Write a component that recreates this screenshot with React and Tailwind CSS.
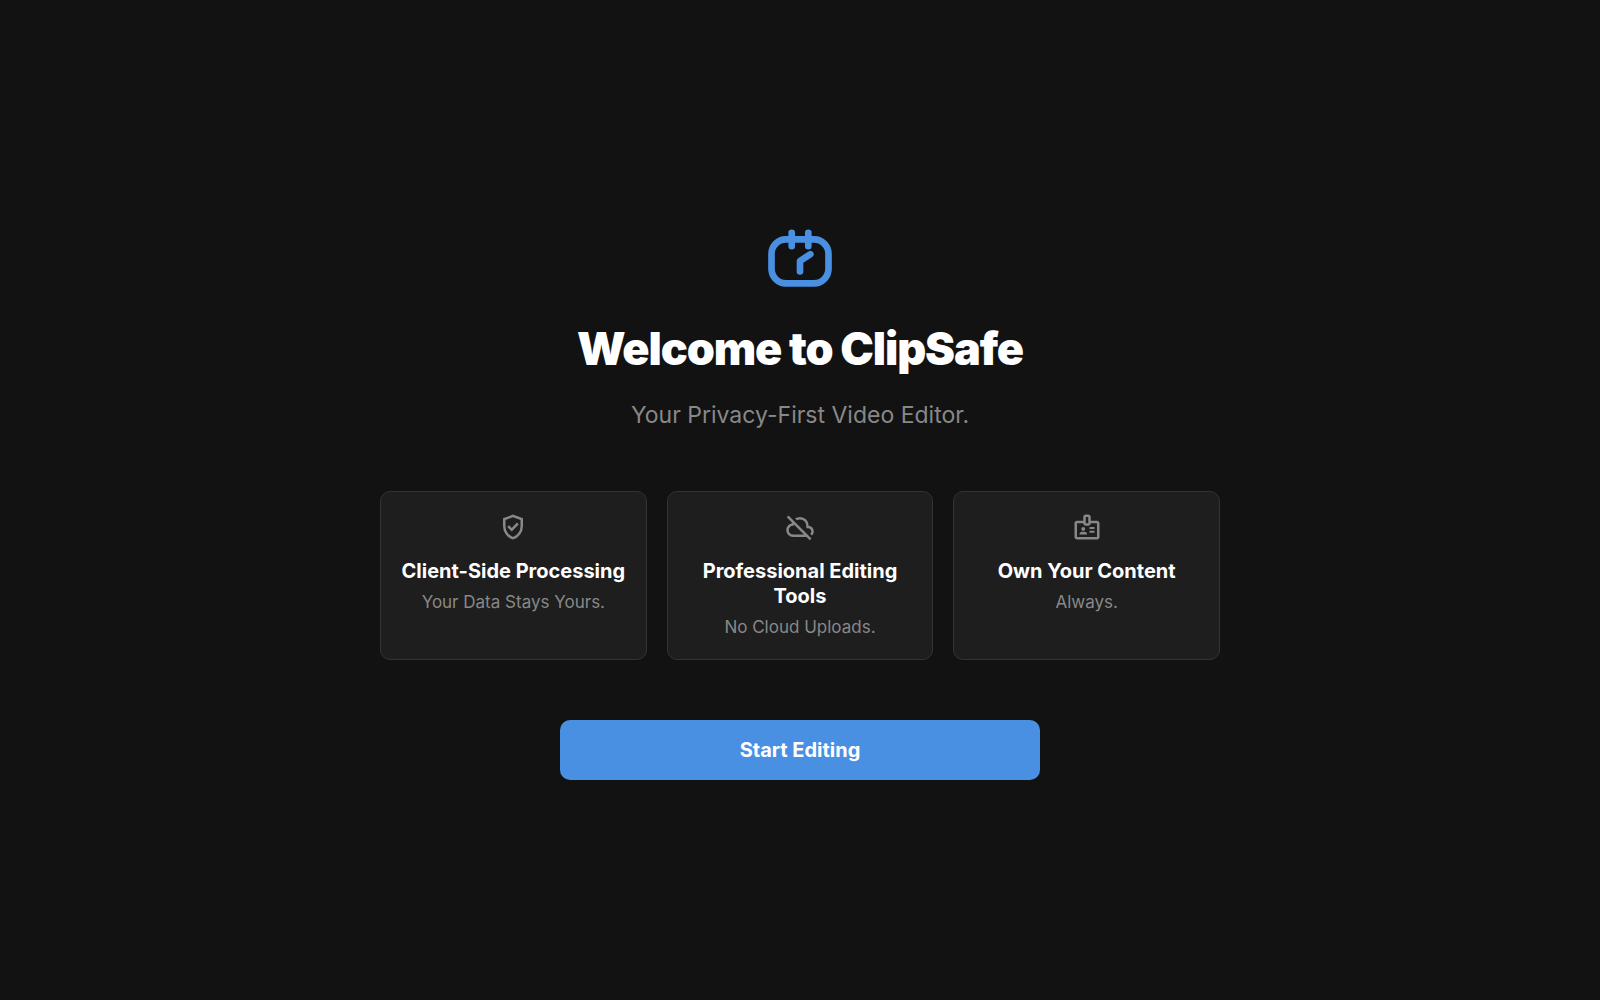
const shieldCheck =
  "m438-338 226-226-57-57-169 169-84-84-57 57 141 141Zm42 258q-139-35-229.5-159.5T160-516v-244l320-120 320 120v244q0 152-90.5 276.5T480-80Zm0-84q104-33 172-132t68-220v-189l-240-90-240 90v189q0 121 68 220t172 132Z";

const cloudOff =
  "M792-56 686-160H260q-92 0-156-64T40-380q0-77 47.5-137T210-594q3-8 6-15.5t6-16.5L56-792l56-56 736 736-56 56ZM260-240h346L284-562q-2 11-3 21t-1 21h-20q-58 0-99 41t-41 99q0 58 41 99t99 41Zm604 30-58-56q17-14 25.5-32.5T840-340q0-42-29-71t-71-29h-60v-80q0-83-58.5-141.5T480-720q-27 0-52 6.5T380-693l-58-58q35-24 74.5-36.5T480-800q117 0 198.5 81.5T760-520q69 8 114.5 59.5T920-340q0 39-15 72.5T864-210Z";

const badge =
  "M160-80q-33 0-56.5-23.5T80-160v-440q0-33 23.5-56.5T160-680h200v-120q0-33 23.5-56.5T440-880h80q33 0 56.5 23.5T600-800v120h200q33 0 56.5 23.5T880-600v440q0 33-23.5 56.5T800-80H160Zm0-80h640v-440H600q0 33-23.5 56.5T520-520h-80q-33 0-56.5-23.5T360-600H160v440Zm80-80h240v-18q0-17-9.5-31.5T444-312q-20-9-40.5-13.5T360-330q-23 0-43.5 4.5T276-312q-17 8-26.5 22.5T240-258v18Zm320-60h160v-60H560v60Zm-200-60q25 0 42.5-17.5T420-420q0-25-17.5-42.5T360-480q-25 0-42.5 17.5T300-420q0 25 17.5 42.5T360-360Zm200-60h160v-60H560v60ZM440-600h80v-200h-80v200Z";

const features = [
  { icon: shieldCheck, title: "Client-Side Processing", text: "Your Data Stays Yours." },
  { icon: cloudOff, title: "Professional Editing Tools", text: "No Cloud Uploads." },
  { icon: badge, title: "Own Your Content", text: "Always." },
];

function Logo() {
  return (
    <svg
      className="size-20 text-[#4a90e2]"
      viewBox="0 0 80 80"
      fill="none"
      stroke="currentColor"
      strokeWidth="6.67"
      strokeLinecap="round"
      strokeLinejoin="round"
      aria-hidden="true"
    >
      <rect x="11.5" y="19.3" width="57" height="44" rx="14.5" />
      <path d="M31.7 12.8v13.4M48.3 12.8v13.4M40 51.5V41l10.3-6.8" />
    </svg>
  );
}

export default function App() {
  return (
    <main className="flex min-h-screen flex-col items-center justify-center bg-[#121212] p-5 text-center font-['Inter',sans-serif] text-white">
      <Logo />
      <h1 className="mt-5 text-[45px] leading-[58px] font-black tracking-tight">Welcome to ClipSafe</h1>
      <p className="mt-5 text-[23px] leading-[34px] text-[#888888]">Your Privacy-First Video Editor.</p>
      <ul className="mt-[59px] grid w-full max-w-[840px] grid-cols-3 gap-5">
        {features.map(({ icon, title, text }) => (
          <li key={title} className="flex flex-col items-center rounded-[10px] border border-[#333333] bg-[#1e1e1e] p-5">
            <svg className="size-[30px] text-[#888888]" viewBox="0 -960 960 960" fill="currentColor" aria-hidden="true">
              <path d={icon} />
            </svg>
            <h2 className="mt-[17px] text-[20px] leading-[25px] font-bold">{title}</h2>
            <p className="mt-[6px] text-[17px] leading-[24px] text-[#888888]">{text}</p>
          </li>
        ))}
      </ul>
      <button type="button" className="mt-[60px] h-[60px] w-full max-w-[480px] rounded-[10px] bg-[#4a90e2] text-[20px] font-bold">
        Start Editing
      </button>
    </main>
  );
}
